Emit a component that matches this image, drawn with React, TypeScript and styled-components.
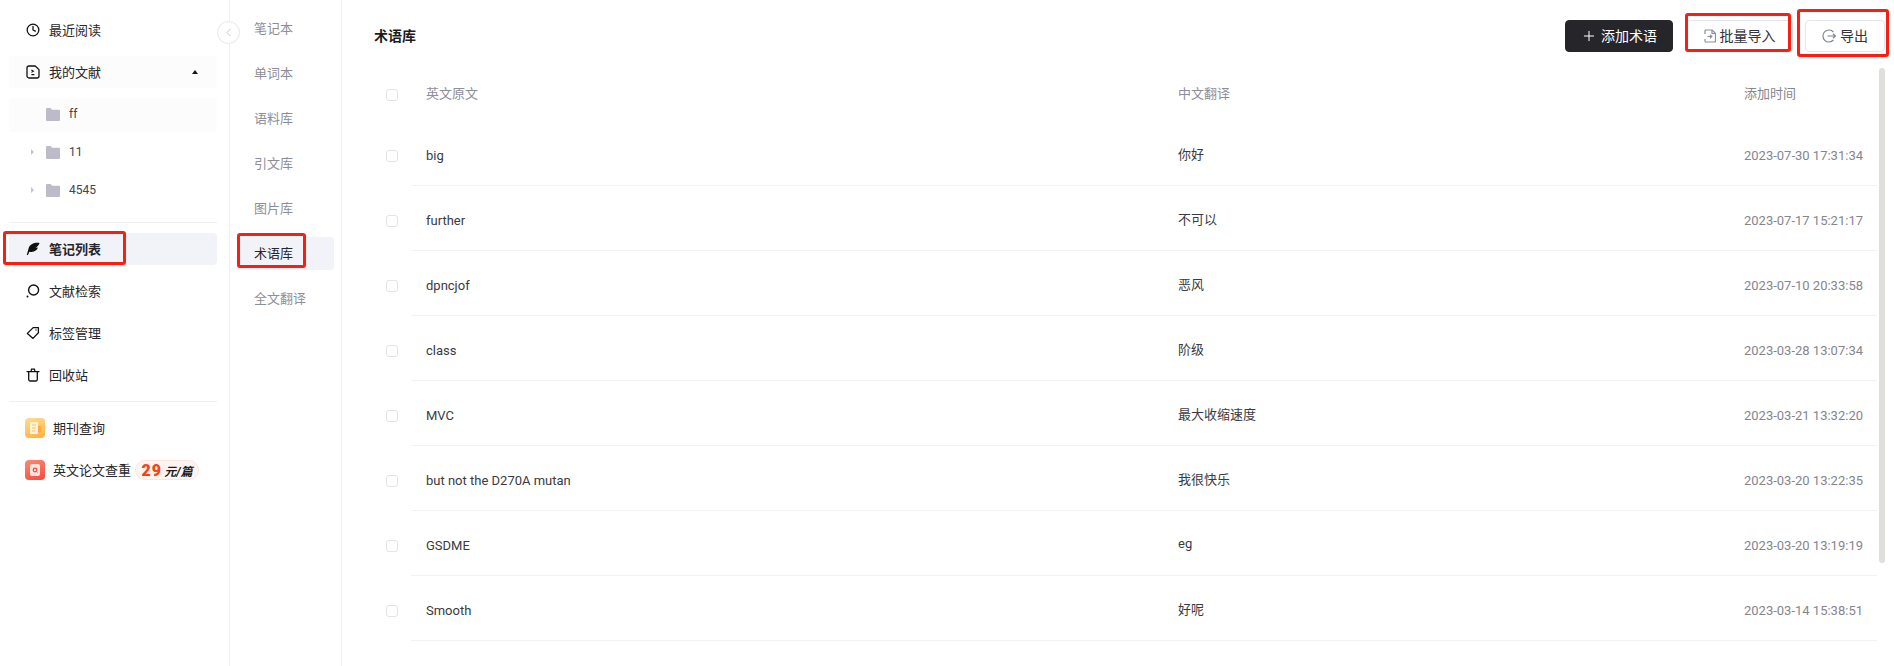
import * as React from 'react';
import styled, {createGlobalStyle} from 'styled-components';
import {Clock, Plus, ChevronLeft} from 'lucide-react';

const GlobalStyle = createGlobalStyle`
    html, body {
        margin: 0;
        padding: 0;
        background: #fff;
        font-family: Roboto, "Noto Sans CJK SC", sans-serif;
    }
`;

const Page = styled.div`
    position: relative;
    display: flex;
    width: 1894px;
    height: 666px;
    overflow: hidden;
    background: #fff;
    color: #26262c;
    font-size: 13px;
`;

const Sidebar = styled.aside`
    position: relative;
    box-sizing: border-box;
    flex: none;
    width: 230px;
    padding: 14px 12px 0 9px;
    border-right: 1px solid #f0f0f4;
`;

const NavItem = styled.div<{$active?: boolean; $soft?: boolean}>`
    display: flex;
    align-items: center;
    height: 32px;
    margin-bottom: 10px;
    padding-left: 17px;
    border-radius: 4px;
    background: ${(p) => (p.$active ? '#f2f3f8' : p.$soft ? '#fcfcfd' : 'transparent')};
    font-weight: ${(p) => (p.$active ? 700 : 400)};
    svg {
        flex: none;
        margin-right: 9px;
    }
`;

const NavLabel = styled.span`
    margin-bottom: 2px;
`;

const Caret = styled.span`
    width: 0;
    height: 0;
    margin-left: 91px;
    border-left: 3px solid transparent;
    border-right: 3px solid transparent;
    border-bottom: 4px solid #16161a;
`;

const FolderRow = styled.div<{$soft?: boolean}>`
    display: flex;
    align-items: center;
    box-sizing: border-box;
    height: 34px;
    margin-bottom: 4px;
    padding: 0 0 2px 22px;
    border-radius: 4px;
    background: ${(p) => (p.$soft ? '#fcfcfd' : 'transparent')};
    font-size: 12px;
    color: #44444c;
`;

const Arrow = styled.span<{$hidden?: boolean}>`
    width: 0;
    height: 0;
    margin-right: 12px;
    border-top: 3px solid transparent;
    border-bottom: 3px solid transparent;
    border-left: 3px solid ${(p) => (p.$hidden ? 'transparent' : '#c4c4ce')};
`;

const FolderName = styled.span`
    margin-left: 9px;
`;

const Divider = styled.div<{$top: number; $bottom: number}>`
    height: 1px;
    margin: ${(p) => p.$top}px 0 ${(p) => p.$bottom}px;
    background: #f0f0f3;
`;

const ExtraItem = styled.div`
    display: flex;
    align-items: center;
    height: 32px;
    margin-bottom: 10px;
    padding-left: 16px;
    white-space: nowrap;
`;

const ExtraIcon = styled.span<{$from: string; $to: string}>`
    display: flex;
    flex: none;
    align-items: center;
    justify-content: center;
    width: 20px;
    height: 20px;
    margin-right: 8px;
    border-radius: 4px;
    background: linear-gradient(160deg, ${(p) => p.$from}, ${(p) => p.$to});
`;

const PriceBadge = styled.span`
    display: flex;
    flex: none;
    align-items: center;
    justify-content: center;
    box-sizing: border-box;
    width: 64px;
    height: 20px;
    margin-left: 4px;
    border: 1px solid #fbe6dd;
    border-radius: 10px;
    background: #fff5f0;
    font-size: 12px;
    font-weight: 700;
    font-style: italic;
    color: #1c1c1c;
    b {
        margin-right: 2px;
        font-size: 16px;
        font-weight: 900;
        font-style: normal;
        letter-spacing: 1px;
        color: #f8420f;
    }
`;

const CollapseButton = styled.button`
    position: absolute;
    top: 21px;
    left: 217px;
    display: flex;
    align-items: center;
    justify-content: center;
    width: 23px;
    height: 23px;
    padding: 0;
    border: 1px solid #e6e6ee;
    border-radius: 50%;
    background: #fff;
    color: #b8b8c8;
`;

const SubNav = styled.nav`
    box-sizing: border-box;
    flex: none;
    width: 112px;
    padding-top: 12px;
    border-right: 1px solid #f0f0f4;
`;

const SubItem = styled.div<{$active?: boolean}>`
    display: flex;
    align-items: center;
    box-sizing: border-box;
    height: 33px;
    margin: 0 7px 12px 10px;
    padding: 0 0 2px 14px;
    border-radius: 4px;
    background: ${(p) => (p.$active ? '#f2f3f8' : 'transparent')};
    color: ${(p) => (p.$active ? '#26262c' : '#8e8e98')};
`;

const Main = styled.main`
    position: relative;
    flex: 1;
    min-width: 0;
`;

const TopBar = styled.header`
    display: flex;
    align-items: center;
    box-sizing: border-box;
    height: 65px;
    padding: 7px 9px 0 32px;
`;

const Title = styled.h1`
    flex: 1;
    margin: 0 0 2px;
    font-size: 14px;
    font-weight: 700;
    color: #1c1c20;
`;

const ToolButton = styled.button<{$dark?: boolean; $w: number; $ml: number}>`
    display: flex;
    align-items: center;
    justify-content: center;
    box-sizing: border-box;
    width: ${(p) => p.$w}px;
    height: 32px;
    margin-left: ${(p) => p.$ml}px;
    padding: 0;
    border: 1px solid ${(p) => (p.$dark ? '#26262a' : '#e4e6ee')};
    border-radius: 4px;
    background: ${(p) => (p.$dark ? '#26262a' : '#fff')};
    color: ${(p) => (p.$dark ? '#fff' : '#33333a')};
    font-family: inherit;
    font-size: 14px;
    svg {
        margin-right: 4px;
    }
    span {
        margin-bottom: 2px;
    }
`;

const Row = styled.div<{$head?: boolean}>`
    display: flex;
    height: ${(p) => (p.$head ? 56 : 65)}px;
    color: ${(p) => (p.$head ? '#8e8e98' : '#3a3a42')};
`;

const CheckCell = styled.div`
    display: flex;
    flex: none;
    align-items: center;
    box-sizing: border-box;
    width: 69px;
    padding: 4px 0 0 44px;
`;

const CheckBox = styled.span`
    box-sizing: border-box;
    width: 12px;
    height: 12px;
    border: 1px solid #e2e2ea;
    border-radius: 3px;
    background: #fff;
`;

const Cells = styled.div<{$line?: boolean}>`
    display: flex;
    flex: 1;
    align-items: center;
    margin-right: 17px;
    padding-top: ${(p) => (p.$line ? 4 : 0)}px;
    border-bottom: 1px solid ${(p) => (p.$line ? '#f2f2f4' : 'transparent')};
`;

const Term = styled.div`
    flex: none;
    box-sizing: border-box;
    width: 767px;
    padding-left: 15px;
`;

const Translation = styled.div<{$head?: boolean}>`
    flex: none;
    width: 566px;
    margin-bottom: ${(p) => (p.$head ? 0 : 4)}px;
`;

const Time = styled.div`
    flex: 1;
    color: #85858f;
`;

const ScrollThumb = styled.div`
    position: absolute;
    top: 68px;
    right: 9px;
    width: 6px;
    height: 495px;
    border-radius: 3px;
    background: #dfdfdc;
`;

// the red annotations drawn over the screenshot
const Mark = styled.div<{$x: number; $y: number; $w: number; $h: number}>`
    position: absolute;
    left: ${(p) => p.$x}px;
    top: ${(p) => p.$y}px;
    box-sizing: border-box;
    width: ${(p) => p.$w}px;
    height: ${(p) => p.$h}px;
    border: 3px solid #fb1d12;
    border-radius: 3px;
    pointer-events: none;
`;

const DocIcon = () => (
    <svg width="14" height="14" viewBox="0 0 14 14" fill="none" stroke="#111" strokeWidth="1.3">
        <path d="M3 1h6.200L13 4.600V11a2 2 0 0 1-2 2H3a2 2 0 0 1-2-2V3a2 2 0 0 1 2-2z" strokeLinejoin="round"/>
        <path d="M5.400 5l2 1.200-2 1.200M8.400 9.600H5.400" strokeWidth="1.100"/>
    </svg>
);

const FeatherIcon = () => (
    <svg width="14" height="14" viewBox="0 0 15 15" fill="#111">
        <path d="M14.500 1C9 .4 4 2 2.600 7.400L.8 14h1.300l1.500-3.600C8.600 11.400 12 9.200 12.700 6l-2.600.2C12.200 5 13.800 3.200 14.500 1z"/>
    </svg>
);

const SearchIcon = () => (
    <svg width="14" height="14" viewBox="0 0 14 14" fill="none" stroke="#111" strokeWidth="1.4">
        <circle cx="7.600" cy="6" r="5"/>
        <circle cx="1.500" cy="12.600" r="1" fill="#111" stroke="none"/>
    </svg>
);

const TagIcon = () => (
    <svg width="14" height="14" viewBox="0 0 14 14" fill="none" stroke="#111" strokeWidth="1.3" strokeLinejoin="round">
        <path d="M7.200 1.600h5.200v5.200L7 12.400 1.400 7.400z"/>
        <circle cx="10" cy="4" r=".7" fill="#111" stroke="none"/>
    </svg>
);

const TrashIcon = () => (
    <svg width="14" height="14" viewBox="0 0 14 14" fill="none" stroke="#111" strokeWidth="1.3" strokeLinecap="round">
        <path d="M1 3.600h12M5 3.400L5.600 1.200h2.800L9 3.400"/>
        <path d="M2.700 4v7.600a1.400 1.400 0 0 0 1.400 1.400h5.800a1.400 1.400 0 0 0 1.400-1.400V4"/>
    </svg>
);

const FolderIcon = () => (
    <svg width="14" height="13" viewBox="0 0 14 13" fill="#bdbbc8">
        <path d="M0 1a1 1 0 0 1 1-1h3.600l1.400 1.800h7a1 1 0 0 1 1 1V12a1 1 0 0 1-1 1H1a1 1 0 0 1-1-1z"/>
    </svg>
);

const ImportIcon = () => (
    <svg width="12" height="14" viewBox="0 0 12 14" fill="none" stroke="#8a8f99" strokeWidth="1.200">
        <path d="M1 5V2a1 1 0 0 1 1-1h6.200L11.500 4.300V12a1 1 0 0 1-1 1H2a1 1 0 0 1-1-1v-2"/>
        <path d="M8 1v3.500h3.500M3.500 7.500h4M6 5.800l1.800 1.700L6 9.200"/>
    </svg>
);

const ExportIcon = () => (
    <svg width="14" height="14" viewBox="0 0 14 14" fill="none" stroke="#7f8590" strokeWidth="1.200">
        <path d="M11.400 3A6 6 0 1 0 11.400 11"/>
        <path d="M5.500 7h8M11 4.800L13.400 7 11 9.200"/>
    </svg>
);

const subItems = ['笔记本', '单词本', '语料库', '引文库', '图片库', '术语库', '全文翻译'];

const folders = ['ff', '11', '4545'];

const terms = [
    {en: 'big', zh: '你好', time: '2023-07-30 17:31:34'},
    {en: 'further', zh: '不可以', time: '2023-07-17 15:21:17'},
    {en: 'dpncjof', zh: '恶风', time: '2023-07-10 20:33:58'},
    {en: 'class', zh: '阶级', time: '2023-03-28 13:07:34'},
    {en: 'MVC', zh: '最大收缩速度', time: '2023-03-21 13:32:20'},
    {en: 'but not the D270A mutan', zh: '我很快乐', time: '2023-03-20 13:22:35'},
    {en: 'GSDME', zh: 'eg', time: '2023-03-20 13:19:19'},
    {en: 'Smooth', zh: '好呢', time: '2023-03-14 15:38:51'},
];

export default function App() {
    return (
        <Page>
            <GlobalStyle/>
            <Sidebar>
                <NavItem><Clock size={14} color="#111" strokeWidth={2.2}/><NavLabel>最近阅读</NavLabel></NavItem>
                <NavItem $soft><DocIcon/><NavLabel>我的文献</NavLabel><Caret/></NavItem>
                {folders.map((name, i) => (
                    <FolderRow key={name} $soft={i === 0}>
                        <Arrow $hidden={i === 0}/>
                        <FolderIcon/>
                        <FolderName>{name}</FolderName>
                    </FolderRow>
                ))}
                <Divider $top={14} $bottom={10}/>
                <NavItem $active><FeatherIcon/><NavLabel>笔记列表</NavLabel></NavItem>
                <NavItem><SearchIcon/><NavLabel>文献检索</NavLabel></NavItem>
                <NavItem><TagIcon/><NavLabel>标签管理</NavLabel></NavItem>
                <NavItem><TrashIcon/><NavLabel>回收站</NavLabel></NavItem>
                <Divider $top={0} $bottom={10}/>
                <ExtraItem>
                    <ExtraIcon $from="#ffdc8e" $to="#fdb044">
                        <svg width="12" height="12" viewBox="0 0 12 12">
                            <rect x="1" y="0" width="8" height="12" rx="1" fill="#fff2d6"/>
                            <rect x="9" y="4" width="3" height="6" fill="#fbab3e"/>
                            <path d="M3 3h4M3 6h4M3 9h3" stroke="#fbc163"/>
                        </svg>
                    </ExtraIcon>
                    <NavLabel>期刊查询</NavLabel>
                </ExtraItem>
                <ExtraItem>
                    <ExtraIcon $from="#fd8b72" $to="#f5493e">
                        <svg width="12" height="12" viewBox="0 0 12 12">
                            <rect x="1" y="0" width="10" height="12" rx="2" fill="#ffe3dd"/>
                            <circle cx="6" cy="6" r="1.800" fill="none" stroke="#f5493e" strokeWidth="1.200"/>
                            <path d="M7.300 7.300l1.200 1.200" stroke="#f5493e"/>
                        </svg>
                    </ExtraIcon>
                    <NavLabel>英文论文查重</NavLabel>
                    <PriceBadge><b>29</b>元/篇</PriceBadge>
                </ExtraItem>
                <CollapseButton><ChevronLeft size={13} strokeWidth={1.5}/></CollapseButton>
            </Sidebar>
            <SubNav>
                {subItems.map((item) => (
                    <SubItem key={item} $active={item === '术语库'}>{item}</SubItem>
                ))}
            </SubNav>
            <Main>
                <TopBar>
                    <Title>术语库</Title>
                    <ToolButton $dark $w={108} $ml={0}><Plus size={16} strokeWidth={1.5}/><span>添加术语</span></ToolButton>
                    <ToolButton $w={107} $ml={13}><ImportIcon/><span>批量导入</span></ToolButton>
                    <ToolButton $w={80} $ml={12}><ExportIcon/><span>导出</span></ToolButton>
                </TopBar>
                <Row $head>
                    <CheckCell><CheckBox/></CheckCell>
                    <Cells>
                        <Term>英文原文</Term>
                        <Translation $head>中文翻译</Translation>
                        <Time>添加时间</Time>
                    </Cells>
                </Row>
                {terms.map((t) => (
                    <Row key={t.time}>
                        <CheckCell><CheckBox/></CheckCell>
                        <Cells $line>
                            <Term>{t.en}</Term>
                            <Translation>{t.zh}</Translation>
                            <Time>{t.time}</Time>
                        </Cells>
                    </Row>
                ))}
                <ScrollThumb/>
            </Main>
            <Mark $x={3} $y={231} $w={123} $h={34}/>
            <Mark $x={237} $y={233} $w={69} $h={35}/>
            <Mark $x={1685} $y={13} $w={106} $h={39}/>
            <Mark $x={1797} $y={9} $w={92} $h={48}/>
        </Page>
    );
}
